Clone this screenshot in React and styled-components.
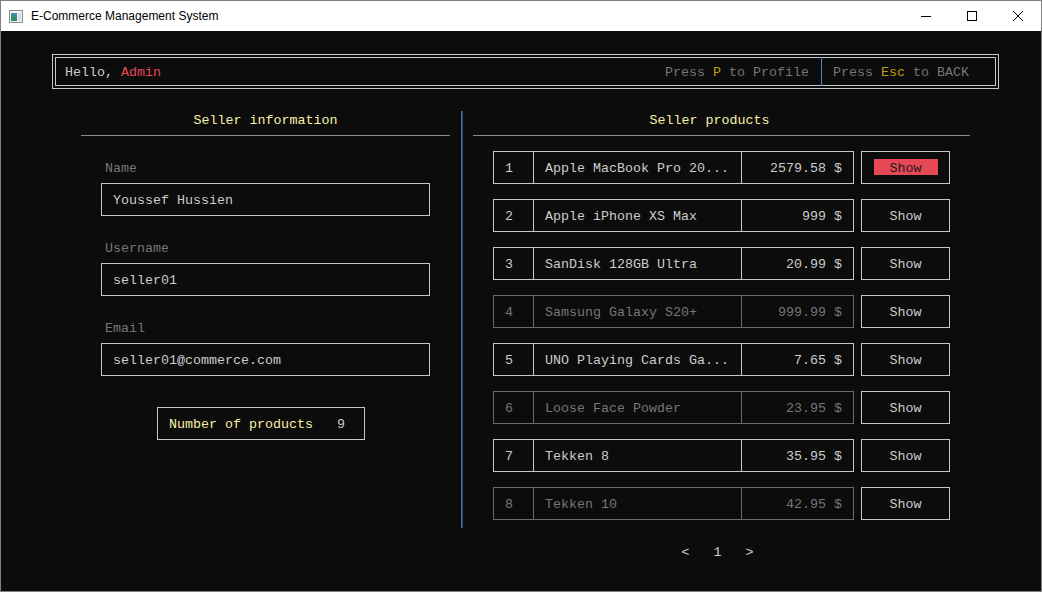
import React from 'react';
import styled, { createGlobalStyle } from 'styled-components';

const GlobalStyle = createGlobalStyle`
  html, body {
    margin: 0;
    padding: 0;
    background: #0c0c0c;
  }
`;

const colors = {
  bg: '#0c0c0c',
  text: '#cccccc',
  dim: '#767676',
  red: '#e74856',
  yellow: '#c19c00',
  title: '#f9f1a5',
  rule: '#8a8a8a',
};

const products = [
  { id: 1, name: 'Apple MacBook Pro 20...', price: '2579.58 $', active: true, selected: true },
  { id: 2, name: 'Apple iPhone XS Max', price: '999 $', active: true },
  { id: 3, name: 'SanDisk 128GB Ultra', price: '20.99 $', active: true },
  { id: 4, name: 'Samsung Galaxy S20+', price: '999.99 $', active: false },
  { id: 5, name: 'UNO Playing Cards Ga...', price: '7.65 $', active: true },
  { id: 6, name: 'Loose Face Powder', price: '23.95 $', active: false },
  { id: 7, name: 'Tekken 8', price: '35.95 $', active: true },
  { id: 8, name: 'Tekken 10', price: '42.95 $', active: false },
];

const fields = [
  { label: 'Name', value: 'Youssef Hussien' },
  { label: 'Username', value: 'seller01' },
  { label: 'Email', value: 'seller01@commerce.com' },
];

const Window = styled.div`
  width: 1042px;
  height: 592px;
  box-sizing: border-box;
  border: 1px solid #808080;
  display: flex;
  flex-direction: column;
  overflow: hidden;
`;

const TitleBar = styled.div`
  height: 30px;
  flex: none;
  background: #ffffff;
  display: flex;
  align-items: center;
  font-family: "Liberation Sans", Arial, sans-serif;
  font-size: 12px;
  color: #000000;
`;

const AppIcon = styled.svg`
  margin-left: 8px;
  margin-right: 8px;
`;

const TitleText = styled.span`
  flex: 1;
  padding-bottom: 1px;
`;

const Control = styled.div`
  width: 46px;
  height: 30px;
  display: flex;
  align-items: center;
  justify-content: center;
`;

const Terminal = styled.div`
  flex: 1;
  background: ${colors.bg};
  font-family: "Liberation Mono", "DejaVu Sans Mono", monospace;
  font-size: 13.333px;
  line-height: 16px;
  color: ${colors.text};
  white-space: pre;
`;

const Header = styled.div`
  margin: 23px 42px 0 51px;
  height: 35px;
  box-sizing: border-box;
  border: 4px double #c8c8c8;
  display: flex;
  align-items: stretch;
`;

const Greeting = styled.div`
  flex: 1;
  padding: 7px 0 0 9px;
`;

const Hint = styled.div`
  padding: 7px ${({ $right }) => $right}px 0 ${({ $left }) => $left}px;
  color: ${colors.dim};
`;

const Key = styled.span`
  color: ${colors.yellow};
`;

const Red = styled.span`
  color: ${colors.red};
`;

const HeaderDivider = styled.div`
  width: 1px;
  margin: -1px 0;
  background: #4f86c0;
`;

const Main = styled.div`
  display: flex;
  align-items: flex-start;
  margin-top: 22px;
  padding-left: 80px;
`;

const Column = styled.div`
  width: ${({ $width }) => $width}px;
  flex: none;
  display: flex;
  flex-direction: column;
`;

const ColumnTitle = styled.div`
  color: ${colors.title};
  text-align: center;
  padding: 2px ${({ $shift }) => $shift || 0}px 0 0;
`;

const Rule = styled.div`
  height: 1px;
  margin-top: 6px;
  background: ${colors.rule};
`;

const Divider = styled.div`
  width: 2px;
  height: 417px;
  flex: none;
  margin: 0 10px 0 11px;
  background: linear-gradient(to right, #3d72a8 50%, #34506c 50%);
`;

const Field = styled.div`
  display: flex;
  flex-direction: column;
  margin-top: 25px;
`;

const Label = styled.div`
  color: ${colors.dim};
  margin-left: 24px;
`;

const Input = styled.div`
  margin: 6px 0 0 20px;
  width: 329px;
  box-sizing: border-box;
  border: 1px solid #c8c8c8;
  padding: 9px 11px 6px;
`;

const CountBox = styled.div`
  align-self: flex-start;
  margin: 31px 0 0 76px;
  border: 1px solid #c8c8c8;
  padding: 9px 19px 6px 11px;
  color: ${colors.title};
`;

const CountValue = styled.span`
  color: ${colors.text};
`;

const List = styled.div`
  display: flex;
  flex-direction: column;
  gap: 15px;
  margin: 15px 0 0 20px;
`;

const Row = styled.div`
  display: flex;
  gap: 7px;
`;

const Cells = styled.div`
  display: flex;
  width: 361px;
  box-sizing: border-box;
  border: 1px solid ${({ $active }) => ($active ? '#c8c8c8' : '#6a6a6a')};
  color: ${({ $active }) => ($active ? colors.text : colors.dim)};
`;

const Cell = styled.div`
  width: ${({ $width }) => $width}px;
  box-sizing: border-box;
  padding: 9px 11px 6px;
  text-align: ${({ $align }) => $align || 'left'};
  border-left: ${({ $first, $active }) =>
    $first ? 'none' : `1px solid ${$active ? '#c8c8c8' : '#6a6a6a'}`};
`;

const ShowButton = styled.div`
  width: 89px;
  box-sizing: border-box;
  border: 1px solid #c8c8c8;
  padding: 7px 0 8px;
  display: flex;
  justify-content: center;
`;

const ShowLabel = styled.span`
  padding: 2px ${({ $selected }) => ($selected ? 16 : 0)}px 0;
  height: 14px;
  background: ${({ $selected }) => ($selected ? colors.red : 'transparent')};
  color: ${({ $selected }) => ($selected ? '#1a1a1a' : colors.text)};
`;

const Pager = styled.div`
  margin-top: 25px;
  text-align: center;
  padding-right: 8px;
`;

const App = () => (
  <>
    <GlobalStyle />
    <Window>
      <TitleBar>
        <AppIcon width="14" height="13" viewBox="0 0 14 13">
          <defs>
            <linearGradient id="ico" x1="0" y1="0" x2="0" y2="1">
              <stop offset="0" stopColor="#3c8fb8" />
              <stop offset="1" stopColor="#2f8a52" />
            </linearGradient>
          </defs>
          <rect x="0.5" y="0.5" width="13" height="12" fill="#f2f2f2" stroke="#8c8c8c" />
          <rect x="2" y="3" width="6" height="8" fill="url(#ico)" />
          <rect x="9" y="3" width="3" height="8" fill="#d8dde0" />
        </AppIcon>
        <TitleText>E-Commerce Management System</TitleText>
        <Control>
          <svg width="10" height="10" viewBox="0 0 10 10">
            <line x1="0" y1="5.5" x2="10" y2="5.5" stroke="#000" strokeWidth="1" />
          </svg>
        </Control>
        <Control>
          <svg width="10" height="10" viewBox="0 0 10 10">
            <rect x="0.5" y="0.5" width="9" height="9" fill="none" stroke="#000" strokeWidth="1" />
          </svg>
        </Control>
        <Control>
          <svg width="10" height="10" viewBox="0 0 10 10">
            <path d="M0 0 L10 10 M10 0 L0 10" stroke="#000" strokeWidth="1" />
          </svg>
        </Control>
      </TitleBar>

      <Terminal>
        <Header>
          <Greeting>
            Hello, <Red>Admin</Red>
          </Greeting>
          <Hint $left={0} $right={12}>
            Press <Key>P</Key> to Profile
          </Hint>
          <HeaderDivider />
          <Hint $left={11} $right={26}>
            Press <Key>Esc</Key> to BACK
          </Hint>
        </Header>

        <Main>
          <Column $width={369}>
            <ColumnTitle>Seller information</ColumnTitle>
            <Rule />
            {fields.map(({ label, value }) => (
              <Field key={label}>
                <Label>{label}</Label>
                <Input>{value}</Input>
              </Field>
            ))}
            <CountBox>
              Number of products   <CountValue>9</CountValue>
            </CountBox>
          </Column>

          <Divider />

          <Column $width={497}>
            <ColumnTitle $shift={24}>Seller products</ColumnTitle>
            <Rule />
            <List>
              {products.map(({ id, name, price, active, selected }) => (
                <Row key={id}>
                  <Cells $active={active}>
                    <Cell $first $width={39}>{id}</Cell>
                    <Cell $active={active} $width={208}>{name}</Cell>
                    <Cell $active={active} $width={112} $align="right">{price}</Cell>
                  </Cells>
                  <ShowButton>
                    <ShowLabel $selected={selected}>Show</ShowLabel>
                  </ShowButton>
                </Row>
              ))}
            </List>
            <Pager>{'<   1   >'}</Pager>
          </Column>
        </Main>
      </Terminal>
    </Window>
  </>
);

export default App;
